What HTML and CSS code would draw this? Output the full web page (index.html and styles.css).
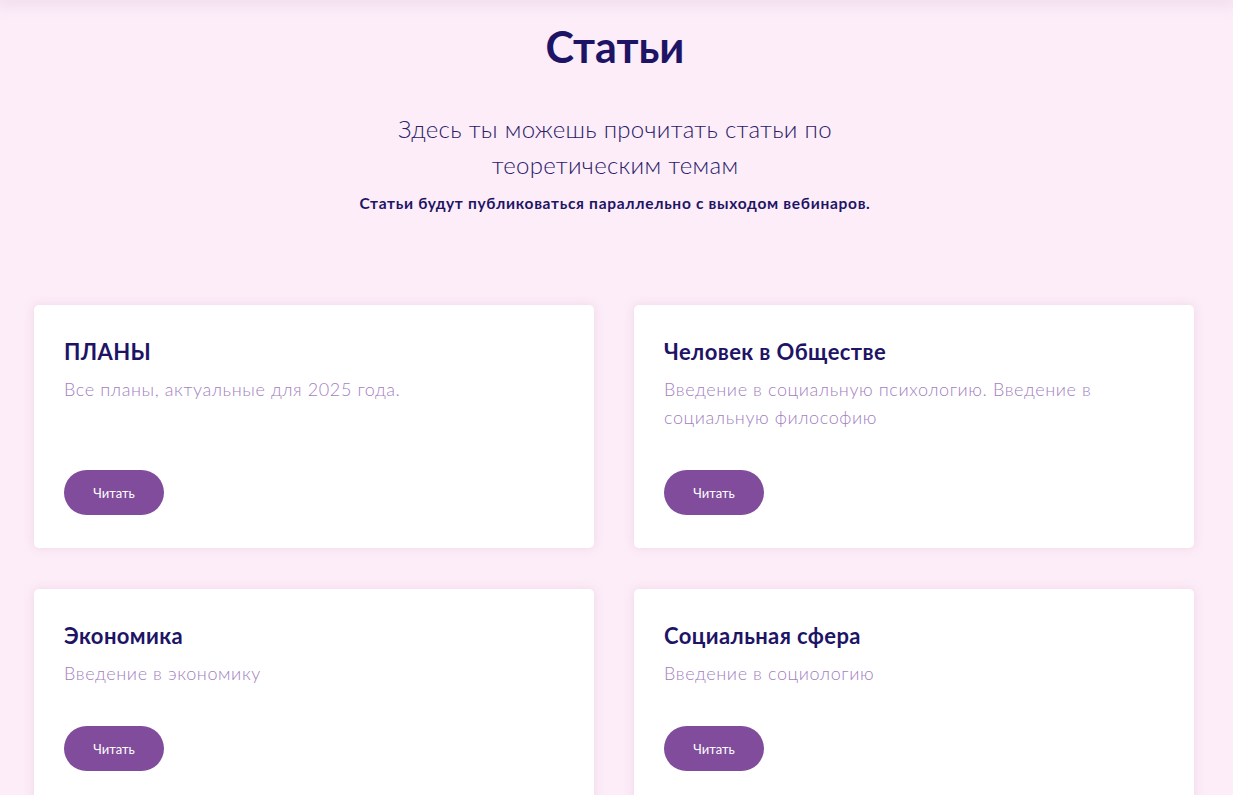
FILE: index.html
```html
<!DOCTYPE html>
<html lang="ru">
<head>
<meta charset="utf-8">
<title>Статьи</title>
<link rel="stylesheet" href="styles.css">
</head>
<body>
<div class="topbar"></div>
<main class="page">
  <header class="intro">
    <h1 class="intro-title">Статьи</h1>
    <p class="intro-lead">Здесь ты можешь прочитать статьи по теоретическим темам</p>
    <p class="intro-note">Статьи будут публиковаться параллельно с выходом вебинаров.</p>
  </header>
  <section class="grid">
    <article class="card">
      <h2 class="card-title">ПЛАНЫ</h2>
      <p class="card-text">Все планы, актуальные для 2025 года.</p>
      <a class="card-btn" href="#">Читать</a>
    </article>
    <article class="card">
      <h2 class="card-title">Человек в Обществе</h2>
      <p class="card-text">Введение в социальную психологию. Введение в социальную философию</p>
      <a class="card-btn" href="#">Читать</a>
    </article>
    <article class="card">
      <h2 class="card-title">Экономика</h2>
      <p class="card-text">Введение в экономику</p>
      <a class="card-btn" href="#">Читать</a>
    </article>
    <article class="card">
      <h2 class="card-title">Социальная сфера</h2>
      <p class="card-text">Введение в социологию</p>
      <a class="card-btn" href="#">Читать</a>
    </article>
  </section>
</main>
</body>
</html>
```
FILE: styles.css
```css
* { box-sizing: border-box; }
html, body { margin: 0; padding: 0; }
body {
  background: #fcedf8;
  font-family: Lato, "Noto Sans", sans-serif;
  color: #1e1466;
  overflow: hidden;
}
.topbar {
  height: 0;
  box-shadow: 0 0 14px 4px rgba(210, 170, 200, 0.35);
}
.page {
  padding: 0 39px 0 34px;
}
.intro {
  display: flex;
  flex-direction: column;
  align-items: center;
  text-align: center;
  padding-left: 2px;
}
.intro-title {
  margin: 20px 0 0;
  font-size: 43px;
  line-height: 54px;
  font-weight: 700;
  color: #1e1466;
}
.intro-lead {
  margin: 37px 0 0;
  max-width: 460px;
  font-size: 24px;
  line-height: 36px;
  font-weight: 300;
  letter-spacing: 0.3px;
  color: #2a2068;
}
.intro-note {
  margin: 9px 0 0;
  font-size: 15.5px;
  line-height: 22px;
  font-weight: 700;
  letter-spacing: 0.7px;
  color: #1e1466;
}
.grid {
  margin-top: 91px;
  display: grid;
  grid-template-columns: 560px 560px;
  column-gap: 40px;
  row-gap: 41px;
}
.card {
  background: #fff;
  border-radius: 5px;
  box-shadow: 0 0 10px rgba(220, 170, 205, 0.35);
  padding: 33px 30px 33px;
  display: flex;
  flex-direction: column;
  align-items: flex-start;
}
.card-title {
  margin: 0;
  font-size: 22px;
  line-height: 28px;
  font-weight: 700;
  letter-spacing: 0.4px;
  color: #1e1466;
}
.card-text {
  margin: 9px 0 0;
  font-size: 18px;
  line-height: 28px;
  font-weight: 300;
  letter-spacing: 0.6px;
  color: #a37fbf;
  max-width: 440px;
  flex-grow: 1;
}
.card-btn {
  margin-top: 39px;
  width: 100px;
  height: 45px;
  border-radius: 23px;
  background: #804c9b;
  color: #fff;
  font-size: 13px;
  text-decoration: none;
  display: flex;
  align-items: center;
  justify-content: center;
}
```
